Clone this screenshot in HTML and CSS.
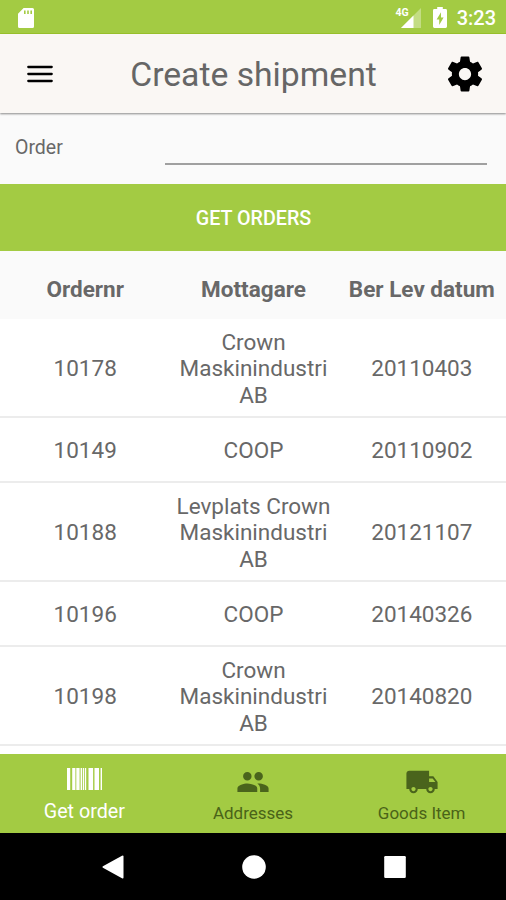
FILE: index.html
```
<!DOCTYPE html>
<html lang="en">
<head>
    <meta charset="UTF-8">
    <meta name="viewport" content="width=device-width, initial-scale=1.0">
    <title>Create shipment</title>
    <link rel="stylesheet" href="styles.css">
</head>
<body>
    <div class="screen">
        <!-- Android status bar -->
        <div class="status-bar">
            <svg class="sd-icon" viewBox="0 0 16 20">
                <path fill="#fff" fill-rule="evenodd" d="M5.6 0H14.5Q16 0 16 1.5V18.5Q16 20 14.5 20H1.5Q0 20 0 18.5V5.8ZM6 2.6V6H7.6V2.6ZM9.2 2.6V6H10.8V2.6ZM12.4 2.6V6H14V2.6Z"/>
            </svg>
            <div class="status-right">
                <span class="network">4G</span>
                <svg class="signal-icon" viewBox="0 0 20 20">
                    <path fill="#fff" fill-opacity=".35" d="M20 0V20H0Z"/>
                    <path fill="#fff" d="M12.5 7.5V20H0Z"/>
                </svg>
                <svg class="battery-icon" viewBox="0 0 14 21">
                    <path fill="#fff" d="M4.2 0H9.8V2H12.6Q14 2 14 3.4V19.6Q14 21 12.6 21H1.4Q0 21 0 19.6V3.4Q0 2 1.4 2H4.2Z"/>
                    <path fill="#a3cb43" d="M8 5.3L3.6 12.6H6.2V18L10.6 10.5H8Z"/>
                </svg>
                <span class="clock">3:23</span>
            </div>
        </div>

        <header class="toolbar">
            <svg class="menu-icon" viewBox="0 0 26 18">
                <path fill="none" stroke="#000" stroke-width="2.3" stroke-linecap="round" d="M1.3 2H24.7M1.3 9H24.7M1.3 16H24.7"/>
            </svg>
            <h1>Create shipment</h1>
            <svg class="gear-icon" viewBox="0 0 24 24">
                <path d="M19.43 12.98c.04-.32.07-.64.07-.98s-.03-.66-.07-.98l2.11-1.65c.19-.15.24-.42.12-.64l-2-3.46c-.12-.22-.39-.3-.61-.22l-2.49 1c-.52-.4-1.08-.73-1.69-.98l-.38-2.65C14.46 2.18 14.25 2 14 2h-4c-.25 0-.46.18-.49.42l-.38 2.65c-.61.25-1.17.59-1.69.98l-2.49-1c-.23-.09-.49 0-.61.22l-2 3.46c-.13.22-.07.49.12.64l2.11 1.65c-.04.32-.07.65-.07.98s.03.66.07.98l-2.11 1.65c-.19.15-.24.42-.12.64l2 3.46c.12.22.39.3.61.22l2.49-1c.52.4 1.08.73 1.69.98l.38 2.65c.03.24.24.42.49.42h4c.25 0 .46-.18.49-.42l.38-2.65c.61-.25 1.17-.59 1.69-.98l2.49 1c.23.09.49 0 .61-.22l2-3.46c.12-.22.07-.49-.12-.64l-2.11-1.65zM12 15.5c-1.93 0-3.5-1.57-3.5-3.5s1.57-3.5 3.5-3.5 3.5 1.57 3.5 3.5-1.57 3.5-3.5 3.5z"/>
            </svg>
        </header>

        <main class="content">
            <div class="order-field">
                <label for="order">Order</label>
                <input type="text" id="order">
            </div>

            <button class="btn" id="getOrdersBtn">GET ORDERS</button>

            <div class="row row-head">
                <span>Ordernr</span>
                <span>Mottagare</span>
                <span>Ber Lev datum</span>
            </div>
            <div class="row tall">
                <span>10178</span>
                <span>Crown Maskinindustri AB</span>
                <span>20110403</span>
            </div>
            <div class="row">
                <span>10149</span>
                <span>COOP</span>
                <span>20110902</span>
            </div>
            <div class="row tall">
                <span>10188</span>
                <span>Levplats Crown Maskinindustri AB</span>
                <span>20121107</span>
            </div>
            <div class="row">
                <span>10196</span>
                <span>COOP</span>
                <span>20140326</span>
            </div>
            <div class="row tall">
                <span>10198</span>
                <span>Crown Maskinindustri AB</span>
                <span>20140820</span>
            </div>
        </main>

        <nav class="tabs">
            <div class="tab active">
                <svg class="barcode-icon" viewBox="0 0 35 22">
                    <path fill="#fff" d="M0 0h3.2v22H0zM5.2 0h3.2v22H5.2zM9.3 0h3.3v22H9.3zM13.6 0h1.6v22h-1.6zM16 0h1.2v22H16zM18 0h1.2v22H18zM21.5 0h4.6v22h-4.6zM27.5 0h4.5v22h-4.5zM33.6 0h1.4v22h-1.4z"/>
                </svg>
                <span>Get order</span>
            </div>
            <div class="tab">
                <svg class="tab-icon" viewBox="0 0 24 24">
                    <path d="M16 11c1.66 0 2.99-1.34 2.99-3S17.66 5 16 5c-1.66 0-3 1.34-3 3s1.34 3 3 3zm-8 0c1.66 0 2.99-1.34 2.99-3S9.66 5 8 5C6.34 5 5 6.34 5 8s1.34 3 3 3zm0 2c-2.33 0-7 1.17-7 3.5V19h14v-2.5c0-2.33-4.67-3.5-7-3.5zm8 0c-.29 0-.62.02-.97.05 1.16.84 1.97 1.97 1.97 3.45V19h6v-2.5c0-2.33-4.67-3.5-7-3.5z"/>
                </svg>
                <span>Addresses</span>
            </div>
            <div class="tab">
                <svg class="tab-icon" viewBox="0 0 24 24">
                    <path d="M20 8h-3V4H3c-1.1 0-2 .9-2 2v11h2c0 1.66 1.34 3 3 3s3-1.34 3-3h6c0 1.66 1.34 3 3 3s3-1.34 3-3h2v-5l-3-4zM6 18.5c-.83 0-1.5-.67-1.5-1.5s.67-1.5 1.5-1.5 1.5.67 1.5 1.5-.67 1.5-1.5 1.5zm13.5-9l1.96 2.5H17V9.5h2.5zm-1.5 9c-.83 0-1.5-.67-1.5-1.5s.67-1.5 1.5-1.5 1.5.67 1.5 1.5-.67 1.5-1.5 1.5z"/>
                </svg>
                <span>Goods Item</span>
            </div>
        </nav>

        <!-- Android navigation buttons -->
        <div class="nav-bar">
            <svg viewBox="0 0 24 24"><path fill="#fff" d="M21 .8Q22.5 0 22.5 1.5V22.5Q22.5 24 21 23.2L1.9 12.7Q.9 12 1.9 11.3Z"/></svg>
            <svg viewBox="0 0 24 24"><circle fill="#fff" cx="12" cy="12" r="11.8"/></svg>
            <svg viewBox="0 0 24 24"><rect fill="#fff" x="1.2" y="1" width="21.6" height="22" rx="1.2"/></svg>
        </div>
    </div>
</body>
</html>
```
FILE: styles.css
```
body {
    font-family: Roboto, sans-serif;
    margin: 0;
    background-color: #fafafa;
    color: #686868;
}
.screen {
    display: flex;
    flex-direction: column;
    width: 506px;
    height: 900px;
    overflow: hidden;
}
.status-bar {
    display: flex;
    align-items: center;
    justify-content: space-between;
    box-sizing: border-box;
    height: 34px;
    padding: 2px 10px 0 18px;
    background-color: #a3cb43;
    border-bottom: 1px solid #9cc62c;
    color: #fff;
}
.status-right {
    display: flex;
    align-items: center;
}
.sd-icon {
    width: 16px;
    height: 20px;
}
.network {
    font-size: 10.5px;
    font-weight: 700;
    line-height: 10px;
    margin: 0 -8px 9px 0;
}
.signal-icon {
    width: 20px;
    height: 20px;
    margin-right: 12px;
}
.battery-icon {
    width: 14px;
    height: 21px;
    margin-right: 10px;
}
.clock {
    font-size: 20px;
    font-weight: 500;
}
.toolbar {
    display: flex;
    align-items: center;
    justify-content: space-between;
    box-sizing: border-box;
    flex: none;
    height: 79px;
    padding: 0 20px 0 27px;
    background-color: #faf7f4;
    box-shadow: 0 1px 2px rgba(0, 0, 0, 0.45);
    z-index: 1;
}
.menu-icon {
    width: 26px;
    height: 18px;
}
.gear-icon {
    width: 42px;
    height: 42px;
}
h1 {
    margin: 2px 0 0 10px;
    font-size: 33.7px;
    font-weight: 400;
    color: #666;
}
.content {
    flex: 1;
    background-color: #fff;
}
.order-field {
    display: flex;
    align-items: flex-start;
    justify-content: space-between;
    box-sizing: border-box;
    height: 71px;
    padding: 23px 19px 0 15px;
    background-color: #fafafa;
}
.order-field label {
    font-size: 19.5px;
}
.order-field input {
    box-sizing: border-box;
    width: 322px;
    height: 29px;
    padding: 0;
    border: none;
    border-bottom: 2px solid #a0a0a0;
    background: none;
}
.btn {
    display: block;
    width: 100%;
    height: 67px;
    padding: 2px 0 0 1px;
    border: none;
    background-color: #a3cb43;
    color: #fff;
    font-family: inherit;
    font-size: 19.7px;
    font-weight: 500;
}
.row {
    display: grid;
    grid-template-columns: repeat(3, 1fr);
    align-items: center;
    box-sizing: border-box;
    height: 64.5px;
    padding: 3px 0 0 1px;
    border-bottom: 2px solid #ececec;
    font-size: 22.5px;
    line-height: 26.7px;
    text-align: center;
}
.row.tall {
    height: 99.5px;
}
.row.row-head {
    height: 67.5px;
    padding-top: 9px;
    border-bottom: none;
    background-color: #fafafa;
    font-weight: 700;
    white-space: nowrap;
}
.tabs {
    display: grid;
    grid-template-columns: repeat(3, 1fr);
    flex: none;
    height: 79px;
    background-color: #a3cb43;
}
.tab {
    display: flex;
    flex-direction: column;
    align-items: center;
    color: #4a6318;
    font-size: 17px;
}
.tab-icon {
    width: 34px;
    height: 34px;
    margin: 11px 0 4px 1px;
    fill: #4a641c;
}
.tab.active {
    color: #fff;
    font-size: 19.7px;
}
.barcode-icon {
    width: 35px;
    height: 22px;
    margin: 14px 0 10px 1px;
}
.nav-bar {
    display: flex;
    align-items: center;
    justify-content: center;
    gap: 117px;
    flex: none;
    height: 67px;
    padding-left: 1px;
    background-color: #000;
}
.nav-bar svg {
    width: 24px;
    height: 24px;
}
```
